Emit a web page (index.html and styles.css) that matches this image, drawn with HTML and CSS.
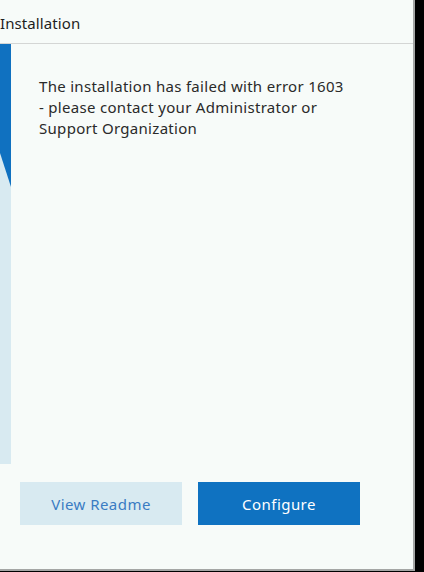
FILE: index.html
```html
<!DOCTYPE html>
<html lang="en">
<head>
  <meta charset="UTF-8">
  <meta name="viewport" content="width=device-width, initial-scale=1.0">
  <title>Installation</title>
  <link rel="stylesheet" href="styles.css">
</head>
<body>

  <div class="window">
    <div class="header">Installation</div>

    <div class="main">
      <!-- Faixa lateral azul -->
      <div class="side">
        <svg class="side-art" viewBox="0 0 11 420" preserveAspectRatio="none">
          <rect x="0" y="0" width="11" height="420" fill="#d8eaf1"/>
          <polygon points="0,0 11,0 11,143 0,109" fill="#1071c0"/>
        </svg>
      </div>

      <div class="content">
        <p class="message">The installation has failed with error 1603 - please contact your Administrator or Support Organization</p>
      </div>
    </div>

    <div class="actions">
      <button class="btn btn-light">View Readme</button>
      <button class="btn btn-primary">Configure</button>
    </div>
  </div>

</body>
</html>
```

FILE: styles.css
```css
body {
  margin: 0;
  padding: 0;
  background-color: #000;
  font-family: "Noto Sans", "Open Sans", sans-serif;
  color: #222;
}

.window {
  width: 413px;
  height: 569px;
  background-color: #f7fbf9;
  border-right: 2px solid #a4a6a5;
  border-bottom: 2px solid #a4a6a5;
  display: flex;
  flex-direction: column;
}

.header {
  height: 40px;
  padding-top: 3px;
  line-height: 41px;
  font-size: 15px;
  letter-spacing: 0.1px;
  color: #1e1e1e;
  border-bottom: 1px solid #d4d6d5;
}

.main {
  display: flex;
  height: 420px;
}

.side {
  width: 11px;
  flex-shrink: 0;
}

.side-art {
  display: block;
  width: 11px;
  height: 420px;
}

.content {
  padding: 32px 0 0 28px;
}

.message {
  margin: 0;
  width: 312px;
  font-size: 15px;
  line-height: 21px;
  letter-spacing: 0.3px;
  color: #2a2a2a;
}

.actions {
  display: flex;
  gap: 16px;
  padding: 18px 0 0 20px;
}

.btn {
  width: 162px;
  height: 43px;
  border: none;
  border-radius: 0;
  font-family: "Noto Sans", "Open Sans", sans-serif;
  font-size: 15px;
  letter-spacing: 0.45px;
  cursor: pointer;
}

.btn-light {
  background-color: #d8eaf1;
  color: #3a7cc3;
}

.btn-primary {
  background-color: #0f72c1;
  color: #fff;
}
```
